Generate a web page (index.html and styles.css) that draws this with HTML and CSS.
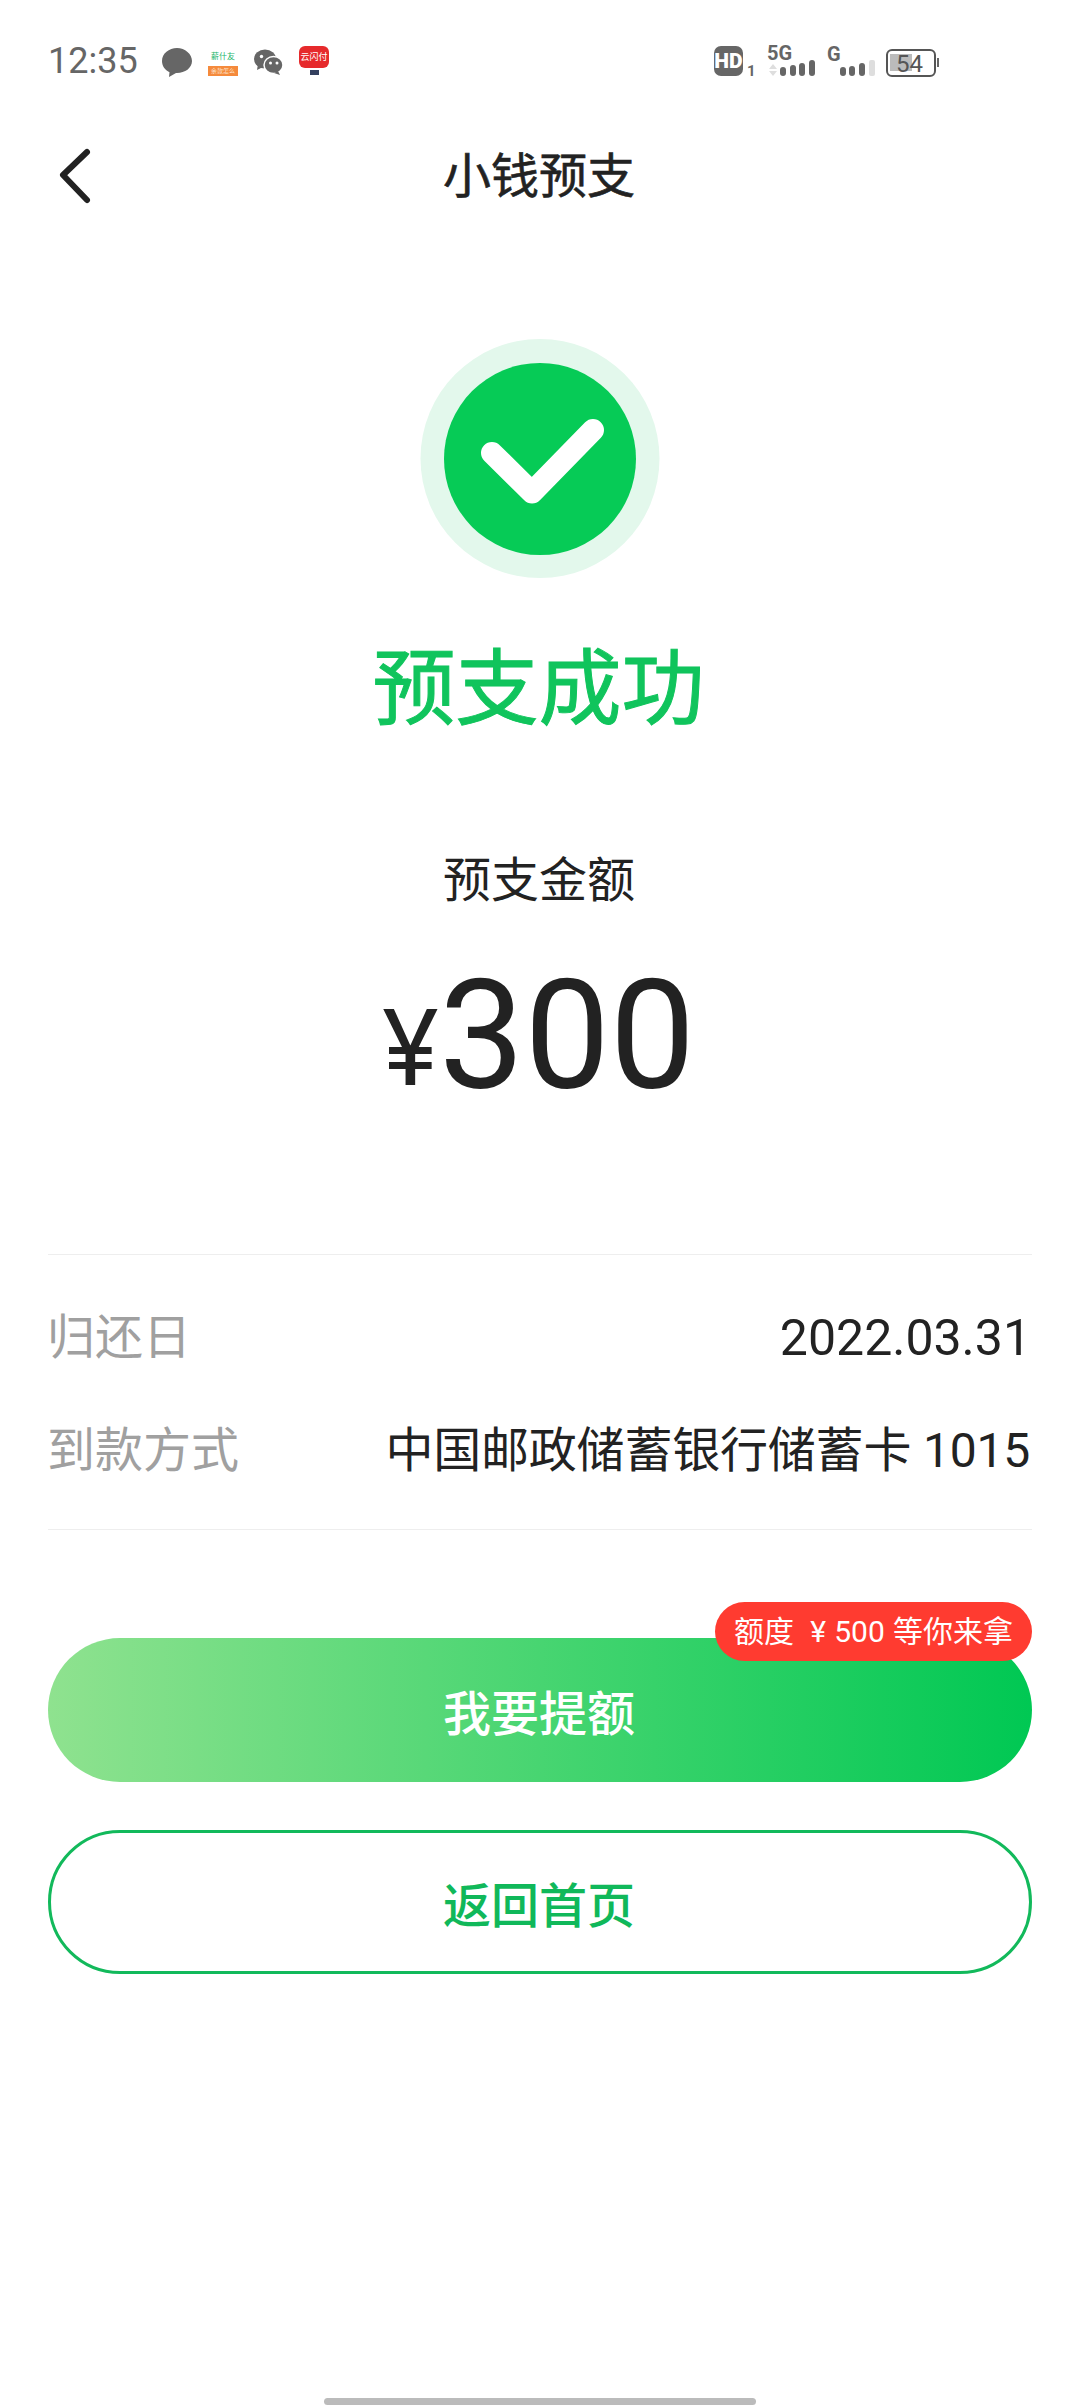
FILE: index.html
```html
<!DOCTYPE html>
<html lang="zh-CN">
<head>
<meta charset="utf-8">
<title>小钱预支</title>
<link rel="stylesheet" href="styles.css">
</head>
<body>
<div class="page">
  <header class="statusbar">
    <span class="time">12:35</span>
    <svg class="ic-msg" width="30" height="32" viewBox="0 0 30 32"><path class="fill-grey" d="M15 2C7 2 0 7.500 0 15c0 5 3 9 7.500 11.300L7 31l7-4h1c8 0 15-5 15-12S23 2 15 2z"/></svg>
    <div class="app-xin">
      <span class="xin-name">薪什友</span>
      <span class="xin-strip">余款怎么</span>
    </div>
    <svg width="29" height="26" viewBox="0 0 29 26" class="ic-wx">
      <ellipse class="fill-grey" cx="11" cy="10" rx="11" ry="9.500"/>
      <path class="fill-grey" d="M4 15l-1 6 6-3z"/>
      <ellipse class="wx-front" cx="19.500" cy="16" rx="9.500" ry="8.500"/>
      <path class="fill-grey" d="M24 22l2 4-6-2z"/>
      <circle class="fill-white" cx="7.500" cy="7.500" r="1.700"/>
      <circle class="fill-white" cx="16.500" cy="14" r="1.500"/>
      <circle class="fill-white" cx="23" cy="14" r="1.500"/>
    </svg>
    <div class="app-pay">
      <span class="pay-name">云闪付</span>
      <span class="pay-tag"></span>
    </div>
    <svg class="status-right" width="228" height="46" viewBox="0 -6 228 46">
      <rect class="fill-grey" x="2" y="2" width="29" height="30" rx="7"/>
      <text class="st-hd" x="16.500" y="24" text-anchor="middle">HD</text>
      <text class="st-sim" x="35" y="32">1</text>
      <text class="st-net" x="55" y="16">5G</text>
      <path class="fill-faint" d="M61 20l4 5h-8zM61 32l4-5h-8z"/>
      <rect class="fill-grey" x="68" y="23" width="6" height="9" rx="3"/>
      <rect class="fill-grey" x="78" y="21" width="6" height="11" rx="3"/>
      <rect class="fill-grey" x="87" y="19" width="6" height="13" rx="3"/>
      <rect class="fill-grey" x="97" y="16" width="6" height="16" rx="3"/>
      <text class="st-net" x="115" y="17">G</text>
      <rect class="fill-grey" x="128" y="23" width="6" height="9" rx="3"/>
      <rect class="fill-grey" x="137" y="22" width="6" height="10" rx="3"/>
      <rect class="fill-grey" x="147" y="19" width="6" height="13" rx="3"/>
      <rect class="fill-faint" x="157" y="16" width="6" height="16" rx="2"/>
      <rect class="bat-shell" x="175" y="6" width="48" height="26" rx="5"/>
      <rect class="bat-level" x="178" y="10" width="22" height="17"/>
      <text class="st-bat" x="184" y="28">54</text>
      <rect class="fill-grey" x="225" y="14" width="2" height="9"/>
    </svg>
  </header>

  <nav class="nav">
    <svg class="back" width="40" height="60" viewBox="0 0 40 60"><path d="M31 5L7 28l24 25"/></svg>
    <h1 class="nav-title">小钱预支</h1>
    <span></span>
  </nav>

  <main class="hero">
    <svg class="check" width="240" height="240" viewBox="0 0 240 240">
      <circle class="check-halo" cx="120" cy="119.500" r="119.500"/>
      <circle class="check-disc" cx="120" cy="120" r="96"/>
      <path class="check-mark" d="M72 114l40 39.500L173 91"/>
    </svg>
    <h2 class="result">预支成功</h2>
    <p class="amount-label">预支金额</p>
    <p class="amount"><span class="yen">¥</span>300</p>
  </main>

  <section class="details">
    <div class="row"><span class="row-key">归还日</span><span class="row-val row-date">2022.03.31</span></div>
    <div class="row"><span class="row-key">到款方式</span><span class="row-val row-bank">中国邮政储蓄银行储蓄卡 1015</span></div>
  </section>

  <section class="actions">
    <div class="btn btn-primary">我要提额<span class="badge">额度  ¥ 500 等你来拿</span></div>
    <div class="btn btn-outline">返回首页</div>
  </section>

  <div class="home-indicator"></div>
</div>
</body>
</html>
```
FILE: styles.css
```css
* { box-sizing: border-box; }
html, body { margin: 0; padding: 0; background: #fff; }
body { font-family: Roboto, "Noto Sans CJK SC", sans-serif; color: #222; }
h1, h2, p { margin: 0; font-weight: 400; }

.page { width: 1080px; height: 2408px; display: flex; flex-direction: column; overflow: hidden; }

/* status bar */
.statusbar { height: 90px; padding: 44px 0 0 48px; display: flex; align-items: flex-start; gap: 16px; }
.time { font-size: 36px; line-height: 34px; color: #666; width: 90px; }
.ic-msg { margin: 2px 0 0 8px; flex: none; }
.fill-grey { fill: #666; }
.fill-white { fill: #fff; }
.fill-faint { fill: #dedede; }
.app-xin { width: 30px; height: 32px; display: flex; flex-direction: column; align-items: center; justify-content: flex-end; }
.xin-name { font-size: 8px; line-height: 10px; color: #1cb56b; margin-bottom: 4px; }
.xin-strip { width: 30px; height: 10px; background: #f58a3c; color: #fde6d0; font-size: 6px; line-height: 10px; text-align: center; }
.ic-wx { margin-top: 5px; flex: none; }
.wx-front { fill: #666; stroke: #fff; stroke-width: 1.500; }
.app-pay { width: 30px; display: flex; flex-direction: column; align-items: center; margin-top: 2px; }
.pay-name { width: 30px; height: 22px; background: #e62a2c; border-radius: 6px; color: #fff; font-size: 9px; line-height: 22px; text-align: center; white-space: nowrap; }
.pay-tag { width: 9px; height: 5px; margin-top: 2px; background: #33405f; }
.status-right { margin: -6px 140px 0 auto; flex: none; }
.st-hd { font: 900 21px Roboto, sans-serif; fill: #fff; }
.st-sim { font: 700 15px Roboto, sans-serif; fill: #666; }
.st-net { font: 700 20px Roboto, sans-serif; fill: #666; }
.st-bat { font: 400 24px Roboto, sans-serif; fill: #555; }
.bat-shell { fill: none; stroke: #555; stroke-width: 2; }
.bat-level { fill: #bbb; }

/* nav */
.nav { height: 174px; padding-left: 56px; display: grid; grid-template-columns: 1fr auto 1fr; align-items: center; }
.nav-title { font-size: 48px; line-height: 60px; color: #222; margin-left: -58px; -webkit-text-stroke: 0.6px #222; }
.back { fill: none; stroke: #222; stroke-width: 6; stroke-linecap: round; stroke-linejoin: round; }

/* hero */
.hero { display: flex; flex-direction: column; align-items: center; padding-top: 75px; }
.check { display: block; }
.check-halo { fill: #e3f8ec; }
.check-disc { fill: #06cb56; }
.check-mark { fill: none; stroke: #fff; stroke-width: 22; stroke-linecap: round; stroke-linejoin: round; }
.result { margin: 61px 3px 0 0; font-size: 83px; line-height: 100px; color: #10c45c; -webkit-text-stroke: 1px #10c45c; }
.amount-label { margin: 111px 2px 0 0; font-size: 48px; line-height: 60px; }
.amount { margin-top: 35px; font-size: 152px; line-height: 180px; color: #222; white-space: nowrap; }
.yen { font-family: Inter, Roboto, sans-serif; font-size: 104px; margin-left: -3px; position: relative; top: -3px; }

/* details */
.details { margin: 114px 48px 0; height: 276px; padding-top: 47px; border-top: 1px solid #eee; border-bottom: 1px solid #eee; display: flex; flex-direction: column; gap: 41px; }
.row { height: 72px; display: flex; justify-content: space-between; align-items: center; font-size: 48px; line-height: 72px; }
.row-key { color: #a0a0a0; margin-left: -1px; }
.row-val { color: #222; margin-right: 2px; }
.row-date { font-size: 50px; margin-right: 1px; }
.row-bank { letter-spacing: -0.2px; }

/* actions */
.actions { margin: 108px 48px 0; display: flex; flex-direction: column; gap: 48px; }
.btn { position: relative; height: 144px; border-radius: 72px; display: flex; align-items: center; justify-content: center; padding-right: 2px; font-size: 48px; font-weight: 500; }
.btn-primary { color: #fff; background: linear-gradient(90deg, #8fe28f 0%, #00c853 100%); }
.btn-outline { color: #10b85a; border: 3px solid #12b95b; background: #fff; }
.badge { position: absolute; right: 0; top: -36px; height: 59px; padding: 0 19px; border-radius: 30px; background: #ff3b30; color: #fff; font-size: 30px; font-weight: 400; line-height: 59px; white-space: pre; word-spacing: 0.7px; }

/* home indicator */
.home-indicator { width: 432px; height: 7px; margin: auto auto 3px; border-radius: 4px; background: #bbb; }
```
